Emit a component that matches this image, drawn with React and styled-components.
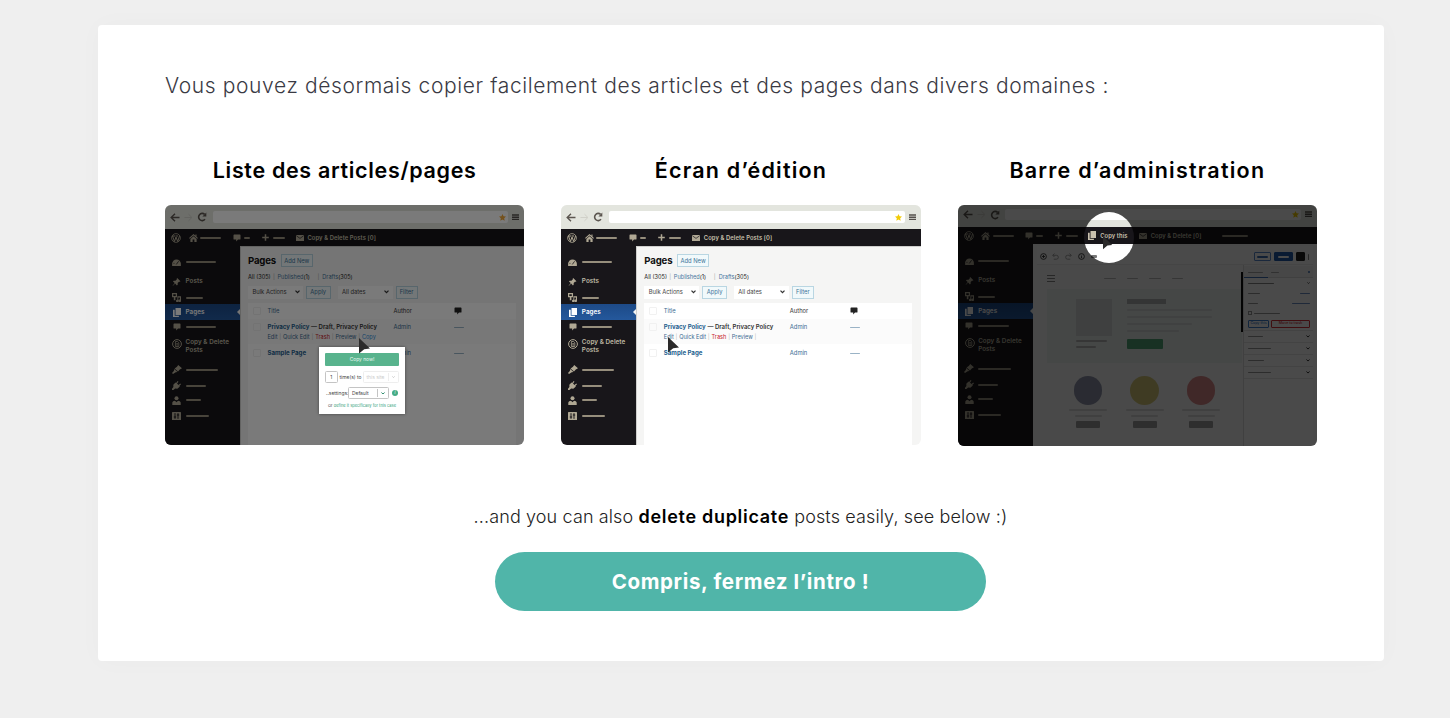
import React from "react";
import styled, { createGlobalStyle } from "styled-components";

const Global = createGlobalStyle`
  * { box-sizing: border-box; }
  body {
    margin: 0;
    background: #efefef;
    font-family: Inter, "Open Sans", sans-serif;
  }
`;

/* ---------- page ---------- */

const Page = styled.main`
  height: 718px;
  padding: 25px 66px 0 98px;
  overflow: hidden;
`;

const Card = styled.section`
  height: 636px;
  padding: 46px 67px 0;
  display: flex;
  flex-direction: column;
  background: #fff;
  border-radius: 4px;
  box-shadow: 0 0 26px rgba(0, 0, 0, 0.022);
`;

const Intro = styled.p`
  margin: 0;
  height: 30px;
  line-height: 30px;
  font-size: 21px;
  font-weight: 300;
  letter-spacing: 0.62px;
  color: #3a3a44;
  white-space: nowrap;
`;

const Columns = styled.div`
  margin-top: 54px;
  display: grid;
  grid-template-columns: repeat(3, 1fr);
  gap: 37px;
`;

const Column = styled.div`
  display: flex;
  flex-direction: column;
  min-width: 0;
`;

const Title = styled.h2`
  margin: 0 0 20px;
  height: 30px;
  line-height: 30px;
  text-align: center;
  font-size: 21.5px;
  font-weight: 600;
  letter-spacing: ${(p) => p.$ls || 0}px;
  color: #000;
  white-space: nowrap;
`;

const Note = styled.p`
  margin: 56px 1px 0 0;
  height: 30px;
  line-height: 30px;
  text-align: center;
  font-size: 18px;
  font-weight: 300;
  letter-spacing: 0.12px;
  color: #222;
  white-space: nowrap;
  b {
    font-weight: 600;
    color: #000;
    letter-spacing: 0.7px;
  }
`;

const CloseButton = styled.button`
  margin: 20px 0 0 330px;
  width: 491px;
  height: 59px;
  border: 0;
  border-radius: 30px;
  background: #50b5a9;
  color: #fff;
  font: 700 20.5px/59px Inter, sans-serif;
  letter-spacing: 0.65px;
  padding: 0;
`;

/* ---------- preview window ---------- */

const Window = styled.div`
  position: relative;
  height: ${(p) => p.$height || 240}px;
  border-radius: 6px;
  overflow: hidden;
  display: flex;
  flex-direction: column;
  background: #f5f5f4;
  font-size: 5.8px;
  line-height: 1;
  color: #333;
  white-space: nowrap;
`;

const BrowserBar = styled.div`
  flex: none;
  height: ${(p) => p.$height}px;
  padding: 0 5px ${(p) => (p.$height < 24 ? 3 : 0)}px 5px;
  display: flex;
  align-items: center;
  background: #e3e5de;
`;

const NavIcons = styled.div`
  width: 42.5px;
  display: flex;
  align-items: center;
  gap: 4px;
`;

const UrlField = styled.div`
  flex: 1;
  height: 11.5px;
  margin-right: 4px;
  padding-right: 2.5px;
  border-radius: 2px;
  background: #fff;
  display: flex;
  align-items: center;
  justify-content: flex-end;
`;

const AdminBar = styled.div`
  flex: none;
  height: 17px;
  padding-left: 6px;
  display: grid;
  grid-template-columns: ${(p) => p.$columns};
  align-items: center;
  background: #18161a;
  color: #c9c2ae;
  font-weight: 600;
  letter-spacing: 0.1px;
`;

const Dash = styled.i`
  display: block;
  flex: none;
  width: ${(p) => p.$w}px;
  height: ${(p) => p.$h || 2}px;
  border-radius: 1px;
  background: ${(p) => p.$color || "#968e7c"};
`;

const Split = styled.div`
  flex: 1;
  display: flex;
  min-height: 0;
`;

const Side = styled.nav`
  flex: none;
  width: 75px;
  padding-top: ${(p) => p.$top || 8}px;
  background: #18161a;
  color: #bdb6a3;
`;

const SideItem = styled.div`
  height: ${(p) => p.$h}px;
  display: grid;
  grid-template-columns: 9px 1fr;
  column-gap: 4.5px;
  align-items: center;
  justify-items: start;
  padding: ${(p) => p.$pt || 0}px 0 0 7px;
  font-size: 6.3px;
  line-height: 7.5px;
  font-weight: 600;
  letter-spacing: 0.05px;
  svg { justify-self: center; }
`;

const SideBadge = styled.span`
  height: 16px;
  width: 10px;
`;

const SideActive = styled(SideItem)`
  position: relative;
  background: linear-gradient(#1d4a87, #24589c);
  color: #fff;
  &::after {
    content: "";
    position: absolute;
    right: 0;
    top: 5px;
    border: solid transparent;
    border-width: 3.5px 3px 3.5px 0;
    border-right-color: #f5f5f4;
  }
`;

const Content = styled.div`
  flex: 1;
  display: flex;
  flex-direction: column;
  min-width: 0;
  padding: 8px 8.5px 0 8px;
  box-shadow: inset 1px 1px 0 #cfcfcd;
`;

const Heading = styled.div`
  display: flex;
  align-items: center;
  gap: 4px;
  height: 13px;
  b {
    width: 28.5px;
    font-size: 9.6px;
    font-weight: 700;
    color: #111;
    letter-spacing: -0.15px;
  }
`;

const SmallButton = styled.span`
  width: ${(p) => p.$w}px;
  height: 13px;
  display: grid;
  place-items: center;
  border: 1px solid #b9d6e2;
  background: #f1f9fb;
  color: #3d7399;
`;

const Statuses = styled.div`
  margin-top: 6px;
  height: 10px;
  display: grid;
  grid-template-columns: 25px 4.5px 40px 4.8px 1fr;
  align-items: center;
  font-size: 5.6px;
  color: #222;
  em { font-style: normal; color: #48789f; }
  i { font-style: normal; color: #aaa; }
`;

const Filters = styled.div`
  margin-top: 2px;
  height: 14px;
  display: flex;
  align-items: center;
`;

const Select = styled.span`
  width: 55px;
  height: 13px;
  margin: 0 3px 0 ${(p) => p.$ml || 0}px;
  padding: 0 3.5px 0 4.5px;
  display: flex;
  align-items: center;
  justify-content: space-between;
  background: #fff;
  color: #444;
`;

const Table = styled.div`
  flex: 1;
  margin-top: 3.5px;
  background: #fff;
`;

const Line = styled.div`
  height: ${(p) => p.$h}px;
  padding: ${(p) => p.$pt || 0}px 0 0 4.5px;
  display: grid;
  grid-template-columns: 15px 126px 60px 1fr;
  align-items: center;
  background: ${(p) => p.$bg || "transparent"};
  color: #3b6c92;
  b { font-weight: 700; color: #25618f; font-size: 6.1px; }
  strong { font-weight: 600; color: #333; font-size: 6px; }
`;

const HeadCell = styled.span`
  color: #333;
`;

const Actions = styled.div`
  height: 10px;
  padding: 0 0 2px 19.5px;
  display: flex;
  align-items: center;
  gap: 1.8px;
  background: #fbfbfb;
  color: #3b6c92;
  font-size: 5.6px;
  i { font-style: normal; color: #bbb; }
  em { font-style: normal; color: #c8242c; }
  u { text-decoration: none; color: #2f8fe0; }
`;

const CheckBox = styled.span`
  width: 8px;
  height: 8px;
  border: 1px solid #f1f1f1;
  border-radius: 1px;
`;

const Dim = styled.div`
  position: absolute;
  inset: 0;
  background: rgba(0, 0, 0, 0.52);
`;

const Cursor = styled.svg`
  position: absolute;
  left: ${(p) => p.$x}px;
  top: ${(p) => p.$y}px;
`;

const Spotlight = styled.div`
  position: absolute;
  left: 126px;
  top: 7px;
  width: 50px;
  height: 51px;
  border-radius: 50%;
  box-shadow: 0 0 0 400px rgba(0, 0, 0, 0.71);
`;

/* ---------- copy popup ---------- */

const Popup = styled.div`
  position: absolute;
  left: 154px;
  top: 142px;
  width: 86px;
  height: 66.5px;
  padding: 6px 6px 0;
  background: #fff;
  box-shadow: 0 0 3px rgba(0, 0, 0, 0.45);
  font-size: 4.9px;
  color: #444;
`;

const PopupButton = styled.div`
  height: 13px;
  display: grid;
  place-items: center;
  background: #58b38d;
  border-radius: 1px;
  color: #e7f7f0;
`;

const PopupRow = styled.div`
  margin-top: ${(p) => p.$mt}px;
  height: 12px;
  display: flex;
  align-items: center;
`;

const PopupField = styled.span`
  height: 12px;
  width: ${(p) => p.$w}px;
  padding: 0 ${(p) => p.$px ?? 4}px;
  display: flex;
  align-items: center;
  justify-content: ${(p) => (p.$center ? "center" : "space-between")};
  border: 1px solid ${(p) => (p.$off ? "#eee" : "#c4c4c4")};
  border-radius: 1.5px;
  color: ${(p) => (p.$off ? "#ccc" : "#444")};
`;

const PopupLabel = styled.span`
  width: ${(p) => p.$w}px;
  padding-left: ${(p) => p.$pl ?? 2}px;
`;

const FieldEnd = styled.span`
  height: 8px;
  padding-left: 3px;
  display: flex;
  align-items: center;
  border-left: 1px solid ${(p) => p.$c};
`;

const InfoDot = styled.i`
  width: 6px;
  height: 6px;
  margin-left: 3px;
  border-radius: 50%;
  background: #45ab86;
  color: #fff;
  font-size: 4px;
  line-height: 6px;
  text-align: center;
`;

const PopupHint = styled.div`
  margin-top: 3.5px;
  text-align: center;
  font-size: 4px;
  line-height: 6px;
  em { font-style: normal; color: #2fa07a; }
`;

/* ---------- block editor preview ---------- */

const Editor = styled.div`
  flex: 1;
  min-width: 0;
  display: flex;
  flex-direction: column;
  padding: 2px 4px 0 4px;
  background: #fafafa;
`;

const EditorTools = styled.div`
  height: 19px;
  padding: 3px 4px 0 3px;
  display: flex;
  align-items: center;
  gap: 3px;
  background: #fff;
  border-bottom: 1px solid #eee;
`;

const ToolIcons = styled.div`
  flex: 1;
  display: flex;
  align-items: center;
  gap: 5.8px;
`;

const ToolButton = styled.span`
  width: ${(p) => p.$w}px;
  height: 8.5px;
  display: grid;
  place-items: center;
  border: 1px solid ${(p) => p.$line};
  border-radius: 1px;
  background: ${(p) => p.$bg || "#fff"};
`;

const EditorSplit = styled.div`
  flex: 1;
  display: flex;
`;

const Canvas = styled.div`
  width: 206px;
  padding-left: 10.5px;
`;

const SiteNav = styled.div`
  height: 24px;
  padding-top: 3px;
  display: flex;
  align-items: center;
  gap: 11px;
`;

const Burger = styled.span`
  width: 8px;
  height: 7px;
  margin-right: 38px;
  border: solid #888;
  border-width: 1px 0;
  display: flex;
  align-items: center;
`;

const Hero = styled.div`
  height: 74px;
  padding: 10px 0 0 28.5px;
  display: grid;
  grid-template-columns: 51px 1fr;
  background: #eef3f2;
`;

const Stack = styled.div`
  display: flex;
  flex-direction: column;
  align-items: ${(p) => (p.$center ? "center" : "flex-start")};
  gap: ${(p) => p.$gap}px;
`;

const Block = styled.span`
  width: ${(p) => p.$w}px;
  height: ${(p) => p.$h}px;
  margin-top: ${(p) => p.$mt || 0}px;
  border-radius: ${(p) => p.$r || 0}px;
  background: ${(p) => p.$bg};
`;

const Features = styled.div`
  padding: 13px 0 0 22px;
  display: grid;
  grid-template-columns: repeat(3, 38px);
  column-gap: 18.5px;
`;

const Settings = styled.aside`
  flex: 1;
  border-left: 1px solid #ddd;
  background: #fff;
  padding-top: 1px;
`;

const SettingsTabs = styled.div`
  height: 12px;
  padding: 0 3px 0 4px;
  display: flex;
  align-items: center;
  gap: 8px;
  background: linear-gradient(90deg, #3f6fb3 24px, #ddd 24px) bottom / 100% 1px no-repeat #f3f3f3;
  i:last-child { margin-left: auto; }
`;

const SettingsRow = styled.div`
  height: ${(p) => p.$h}px;
  padding: 0 3px 0 4px;
  display: flex;
  align-items: center;
  justify-content: ${(p) => (p.$start ? "flex-start" : "space-between")};
  gap: 2px;
  border-bottom: ${(p) => (p.$line ? "1px solid #e6e6e6" : "0")};
`;

const OptionBox = styled.span`
  width: 4px;
  height: 4px;
  border: 1px solid #999;
`;

const TinyButton = styled.span`
  width: ${(p) => p.$w}px;
  height: 7.5px;
  display: grid;
  place-items: center;
  border: 1px solid ${(p) => p.$c};
  border-radius: 1px;
  color: ${(p) => p.$c};
  font-size: 3.6px;
  font-weight: 500;
`;

const ScrollThumb = styled.i`
  width: 2px;
  height: 60px;
  margin: 7px 0 0 -1px;
  background: #111;
`;

/* ---------- drawings ---------- */

const tan = "#b0a894";

const Back = ({ c = "#5c5650" }) => (
  <svg width="10" height="9" viewBox="0 0 10 9" fill="none" stroke={c} strokeWidth="1.4">
    <path d="M9.5 4.5H1.4M5 .8 1.2 4.5 5 8.2" />
  </svg>
);
const Forward = () => (
  <svg width="9" height="9" viewBox="0 0 10 9" fill="none" stroke="#cfcfc8" strokeWidth="1.1">
    <path d="M.5 4.5h8M5 .8l3.8 3.7L5 8.2" />
  </svg>
);
const Reload = () => (
  <svg width="10" height="10" viewBox="0 0 10 10" fill="none" stroke="#5c5650" strokeWidth="1.6">
    <path d="M8 7.3A3.6 3.6 0 1 1 7.6 2.3" />
    <path d="M9.3.6v4H5.4z" fill="#5c5650" stroke="none" />
  </svg>
);
const Star = ({ c = "#f2cb05" }) => (
  <svg width="7" height="7" viewBox="0 0 10 10" fill={c}>
    <path d="m5 0 1.5 3.3 3.5.4-2.6 2.4.7 3.6L5 7.9 1.9 9.7l.7-3.6L0 3.7l3.5-.4z" />
  </svg>
);
const Menu = () => (
  <svg width="7" height="7" viewBox="0 0 7 7" stroke="#55504c" strokeWidth="1.4">
    <path d="M0 1h7M0 3.2h7M0 5.4h7" />
  </svg>
);
const WordPress = () => (
  <svg width="10" height="10" viewBox="0 0 20 20" fill="none" stroke={tan}>
    <circle cx="10" cy="10" r="8.8" strokeWidth="1.6" />
    <path d="m3 6 4 11 3-9 3.4 9L17 6M2.5 6H8M9 6h5" strokeWidth="2" />
  </svg>
);
const Home = () => (
  <svg width="9" height="8" viewBox="0 0 10 9" fill={tan}>
    <path d="M5 0 0 4.6l.8.8L5 1.7l4.2 3.7.8-.8-1.6-1.5V.6H7.2V2z" />
    <path d="M1.5 5.6 5 2.6l3.5 3V9H6V6.2H4V9H1.5z" />
  </svg>
);
const Bubble = ({ c = tan }) => (
  <svg width="8" height="8" viewBox="0 0 8 8" fill={c}>
    <path d="M1.2.6h5.6q.7 0 .7.7v3.6q0 .7-.7.7H5L3.2 7.6V5.6h-2q-.7 0-.7-.7V1.3q0-.7.7-.7z" />
  </svg>
);
const Plus = () => (
  <svg width="7" height="7" viewBox="0 0 7 7" stroke={tan} strokeWidth="1.5">
    <path d="M3.5.2v6.6M.2 3.5h6.6" />
  </svg>
);
const Mail = () => (
  <svg width="8" height="6" viewBox="0 0 8 6">
    <rect width="8" height="6" rx=".6" fill={tan} />
    <path d="m.4.8 3.6 2.6L7.6.8" fill="none" stroke="#18161a" strokeWidth=".7" />
  </svg>
);
const Copies = ({ c = "#fff" }) => (
  <svg width="8" height="9" viewBox="0 0 8 9" fill={c}>
    <path d="M2.5 0H8v7H2.5z" />
    <path d="M0 1.8h1.7v6h4.2V9H0z" />
  </svg>
);
const Gauge = () => (
  <svg width="9" height="7" viewBox="0 0 10 8">
    <path d="M0 5.5A5 5 0 0 1 10 5.5V8H0z" fill={tan} />
    <path d="m4.8 6.2 2.6-3.6M1.6 5h1" stroke="#18161a" strokeWidth=".9" />
  </svg>
);
const Pin = () => (
  <svg width="9" height="8" viewBox="0 0 9 9" fill={tan}>
    <path d="M5.3 0 9 3.7l-1 .5-.7-.1-1.5 1.5.1 1.8-.9.9-2-2L.3 9l-.1-.3 2.3-3-2-1.8.9-.9 1.9.1L4.8 1.6l-.1-.7z" />
  </svg>
);
const Media = () => (
  <svg width="9" height="9" viewBox="0 0 10 10" fill={tan}>
    <path d="M0 0h5.6v4.6H3.8V8H2V4.6H0zM1.4 1.3v2h2.8v-2z" fillRule="evenodd" />
    <path d="M6 3.5h4v5.2A1.5 1.5 0 1 1 8.8 7.3V5H7v3.8a1.3 1.3 0 1 1-1-1.3z" />
  </svg>
);
const CopyBadge = () => (
  <svg width="10" height="10" viewBox="0 0 10 10" fill="none" stroke={tan}>
    <circle cx="5" cy="5" r="4.4" strokeWidth="1" />
    <path d="M3.4 2.5h2.2l1.2 1.2v3.8H3.4zM4.2 4.7h1.8M4.2 6h1.8" strokeWidth=".8" />
  </svg>
);
const Brush = () => (
  <svg width="10" height="9" viewBox="0 0 10 9" fill={tan}>
    <path d="M6.2 0 10 3.2 7.8 4.4 6 6.6 2.6 3.6 5 1.8zM2.3 4.1l3.2 2.8L3.7 7.2 1 9 0 8.1l1.8-2.2z" />
  </svg>
);
const Plug = () => (
  <svg width="9" height="9" viewBox="0 0 9 9" fill={tan}>
    <path d="M5.6 0 6.5.8 5 2.5l1.5 1.4L8.2 2.5l.8.8-1.7 1.6.6.7-2.6 2.1-2.1-.2L1.4 9H0V7.7l1.4-1.6-.1-2.3L3.5 1.4l.6.5z" />
  </svg>
);
const Person = () => (
  <svg width="9" height="9" viewBox="0 0 9 9" fill={tan}>
    <circle cx="4.5" cy="2.2" r="2" />
    <path d="M.3 9V6.5Q.6 5 3 4.7l1.5 1.5L6 4.7q2.4.3 2.7 1.8V9z" />
  </svg>
);
const Sliders = () => (
  <svg width="9" height="8" viewBox="0 0 9 8">
    <rect width="9" height="8" rx=".5" fill={tan} />
    <path d="M3 1.2v5.6M1.8 5h2.4M6 1.2v5.6M4.8 3h2.4" stroke="#18161a" strokeWidth="1" />
  </svg>
);
const Chevron = ({ c = "#333", s = 5 }) => (
  <svg width={s} height={s * 0.7} viewBox="0 0 6 4" fill="none" stroke={c} strokeWidth="1.5">
    <path d="m.6.6 2.4 2.4L5.4.6" />
  </svg>
);
const RoundTool = ({ d }) => (
  <svg width="7" height="7" viewBox="0 0 8 8" fill="none" stroke="#333" strokeWidth="1">
    <circle cx="4" cy="4" r="3.3" />
    <path d={d} />
  </svg>
);
const Turn = ({ flip }) => (
  <svg width="7" height="7" viewBox="0 0 8 8" fill="none" stroke="#999" strokeWidth="1">
    <path
      transform={flip ? "matrix(-1 0 0 1 8 0)" : undefined}
      d="M1 2.6h4a2.2 2.2 0 0 1 0 4.5H2M2.8.6l-2 2 2 2"
    />
  </svg>
);
const Pointer = ({ x, y, s = 1 }) => (
  <Cursor $x={x} $y={y} width={11 * s} height={16 * s} viewBox="0 0 11 16" fill="#2b2a2a">
    <path d="M0 0 11 10.6 5.2 11.2 0 15.6z" />
  </Cursor>
);

/* ---------- shared pieces ---------- */

function Browser({ height = 24, star }) {
  return (
    <BrowserBar $height={height}>
      <NavIcons>
        <Back />
        <Forward />
        <Reload />
      </NavIcons>
      <UrlField>
        <Star c={star} />
      </UrlField>
      <Menu />
    </BrowserBar>
  );
}

function Sidebar({ top }) {
  return (
    <Side $top={top}>
      <SideItem $h={16}><Gauge /><Dash $w={30.5} /></SideItem>
      <SideItem $h={21} $pt={2}><Pin />Posts</SideItem>
      <SideItem $h={13}><Media /><Dash $w={17} /></SideItem>
      <SideActive $h={16} $pt={1}><Copies />Pages</SideActive>
      <SideItem $h={13}><Bubble /><Dash $w={30.5} /></SideItem>
      <SideItem $h={25} $pt={2}>
        <SideBadge><CopyBadge /></SideBadge>
        <span>Copy &amp; Delete<br />Posts</span>
      </SideItem>
      <SideItem $h={23}><Brush /><Dash $w={32.5} /></SideItem>
      <SideItem $h={8}><Plug /><Dash $w={20} /></SideItem>
      <SideItem $h={22}><Person /><Dash $w={15} /></SideItem>
      <SideItem $h={10}><Sliders /><Dash $w={23} /></SideItem>
    </Side>
  );
}

function PagesScreen({ star, withCopy, children }) {
  return (
    <Window>
      <Browser star={star} />
      <AdminBar $columns="17.5px 11.5px 32.5px 11px 18px 11px 23px 12px 1fr">
        <WordPress />
        <Home />
        <Dash $w={21} />
        <Bubble />
        <Dash $w={6.5} />
        <Plus />
        <Dash $w={12} />
        <Mail />
        <span>Copy &amp; Delete Posts [0]</span>
      </AdminBar>
      <Split>
        <Sidebar />
        <Content>
          <Heading>
            <b>Pages</b>
            <SmallButton $w={32.5}>Add New</SmallButton>
          </Heading>
          <Statuses>
            <span>All (305)</span><i>|</i>
            <span><em>Published</em>(1)</span><i>|</i>
            <span><em>Drafts</em>(305)</span>
          </Statuses>
          <Filters>
            <Select>Bulk Actions <Chevron /></Select>
            <SmallButton $w={24.5}>Apply</SmallButton>
            <Select $ml={7}>All dates <Chevron /></Select>
            <SmallButton $w={22}>Filter</SmallButton>
          </Filters>
          <Table>
            <Line $h={16}>
              <CheckBox /><span>Title</span>
              <HeadCell>Author</HeadCell><Bubble c="#222" />
            </Line>
            <Line $h={15} $pt={2} $bg="#fbfbfb">
              <CheckBox />
              <span><b>Privacy Policy</b> <strong>— Draft, Privacy Policy</strong></span>
              <span>Admin</span><Dash $w={10.5} $h={1} $color="#9ab3c6" />
            </Line>
            <Actions>
              Edit <i>|</i> Quick Edit <i>|</i> <em>Trash</em> <i>|</i> Preview <i>|</i>
              {withCopy && <u>Copy</u>}
            </Actions>
            <Line $h={17} $pt={2}>
              <CheckBox /><b>Sample Page</b>
              <span>Admin</span><Dash $w={10.5} $h={1} $color="#9ab3c6" />
            </Line>
          </Table>
        </Content>
      </Split>
      {children}
    </Window>
  );
}

function CopyPopup() {
  return (
    <Popup>
      <PopupButton>Copy now!</PopupButton>
      <PopupRow $mt={5}>
        <PopupField $w={12.5} $center $px={0}>1</PopupField>
        <PopupLabel $w={25}>time(s) to</PopupLabel>
        <PopupField $w={36} $px={3} $off>
          this site <FieldEnd $c="#eee"><Chevron c="#bbb" s={3} /></FieldEnd>
        </PopupField>
      </PopupRow>
      <PopupRow $mt={4}>
        <PopupLabel $w={23} $pl={1}>..settings:</PopupLabel>
        <PopupField $w={41} $px={3}>
          Default <FieldEnd $c="#c4c4c4"><Chevron c="#2a8a6a" s={4} /></FieldEnd>
        </PopupField>
        <InfoDot>i</InfoDot>
      </PopupRow>
      <PopupHint>Or <em>define it specifically for this case</em></PopupHint>
    </Popup>
  );
}

const features = ["#9095ac", "#d8cc7a", "#dc8a8a"];
const panels = [15, 23, 16, 23];

function EditorScreen() {
  return (
    <Window $height={241}>
      <Browser height={22} />
      <AdminBar $columns="17.5px 11.5px 32.5px 11px 19px 11px 22px 12px 38.5px 12px 71px 1fr">
        <WordPress />
        <Home />
        <Dash $w={21} />
        <Bubble />
        <Dash $w={6.5} />
        <Plus />
        <Dash $w={12} />
        <Copies c="#c9c1ad" />
        <span>Copy this</span>
        <Mail />
        <span>Copy &amp; Delete [0]</span>
        <Dash $w={26.5} />
      </AdminBar>
      <Split>
        <Sidebar top={9} />
        <Editor>
          <EditorTools>
            <ToolIcons>
              <RoundTool d="M4 2.2v3.6M2.2 4h3.6" />
              <Turn />
              <Turn flip />
              <RoundTool d="M4 3.6v2.2M4 2.2v.6" />
              <Dash $w={6} $h={3} $color="#777" />
            </ToolIcons>
            <ToolButton $w={17} $line="#5b8bd0"><Dash $w={11} $color="#3f6fb3" /></ToolButton>
            <ToolButton $w={19} $line="#1f5cad" $bg="#1f5cad"><Dash $w={11} $color="#fff" /></ToolButton>
            <ToolButton $w={9} $line="#222" $bg="#222" />
            <Dash $w={1.5} $h={6} $color="#888" />
          </EditorTools>
          <EditorSplit>
            <Canvas>
              <SiteNav>
                <Burger><Dash $w={8} $h={1} $color="#888" /></Burger>
                <Dash $w={11.5} $h={1} $color="#bbb" />
                <Dash $w={11.5} $h={1} $color="#bbb" />
                <Dash $w={11.5} $h={1} $color="#bbb" />
                <Dash $w={11.5} $h={1} $color="#bbb" />
              </SiteNav>
              <Hero>
                <Stack $gap={4}>
                  <Block $w={36.5} $h={37} $bg="#d8dbdb" />
                  <Dash $w={31} $color="#bbb" />
                  <Dash $w={20} $color="#bbb" />
                </Stack>
                <Stack $gap={5}>
                  <Block $w={39} $h={5} $bg="#b3b7b7" />
                  <Dash $w={85} $color="#dcdfdf" />
                  <Dash $w={85} $color="#dcdfdf" />
                  <Dash $w={65} $color="#dcdfdf" />
                  <Dash $w={52} $color="#dcdfdf" />
                  <Block $w={36} $h={10} $mt={2} $r={1} $bg="#53a878" />
                </Stack>
              </Hero>
              <Features>
                {features.map((c) => (
                  <Stack key={c} $center $gap={4}>
                    <Block $w={28.5} $h={28.5} $r={15} $bg={c} />
                    <Dash $w={38} $color="#dcdcdc" />
                    <Dash $w={27} $color="#dcdcdc" />
                    <Block $w={24} $h={7.5} $r={1} $bg="#a0a0a0" />
                  </Stack>
                ))}
              </Features>
            </Canvas>
            <ScrollThumb />
            <Settings>
              <SettingsTabs>
                <Dash $w={15} $h={1} $color="#aaa" />
                <Dash $w={8} $h={1} $color="#aaa" />
                <Dash $w={2.5} $h={2.5} $color="#3f6fb3" />
              </SettingsTabs>
              <SettingsRow $h={11}><Dash $w={26} $h={1} $color="#888" /><Chevron s={3} /></SettingsRow>
              <SettingsRow $h={9}><Dash $w={12} $h={1} $color="#999" /><Dash $w={10} $h={1} $color="#6b8fc4" /></SettingsRow>
              <SettingsRow $h={10}><Dash $w={10} $h={1} $color="#999" /><Dash $w={18} $h={1} $color="#6b8fc4" /></SettingsRow>
              <SettingsRow $h={10} $start><OptionBox /><Dash $w={26} $h={1} $color="#999" /></SettingsRow>
              <SettingsRow $h={13} $line>
                <TinyButton $w={21} $c="#3f7fd0">Copy this</TinyButton>
                <TinyButton $w={39} $c="#d8333a">Move to trash</TinyButton>
              </SettingsRow>
              {panels.map((w, i) => (
                <SettingsRow key={i} $h={12} $line>
                  <Dash $w={w} $h={1} $color="#999" /><Chevron s={4} />
                </SettingsRow>
              ))}
            </Settings>
          </EditorSplit>
        </Editor>
      </Split>
      <Spotlight />
      <Pointer x={145} y={31} s={0.85} />
    </Window>
  );
}

export default function App() {
  return (
    <Page>
      <Global />
      <Card>
        <Intro>Vous pouvez désormais copier facilement des articles et des pages dans divers domaines :</Intro>
        <Columns>
          <Column>
            <Title $ls={0.67}>Liste des articles/pages</Title>
            <PagesScreen star="#f2a93b" withCopy>
              <Dim />
              <CopyPopup />
              <Pointer x={194} y={133} />
            </PagesScreen>
          </Column>
          <Column>
            <Title $ls={1.2}>Écran d’édition</Title>
            <PagesScreen>
              <Pointer x={107} y={132} />
            </PagesScreen>
          </Column>
          <Column>
            <Title $ls={1.22}>Barre d’administration</Title>
            <EditorScreen />
          </Column>
        </Columns>
        <Note>...and you can also <b>delete duplicate</b> posts easily, see below :)</Note>
        <CloseButton>Compris, fermez l’intro !</CloseButton>
      </Card>
    </Page>
  );
}
